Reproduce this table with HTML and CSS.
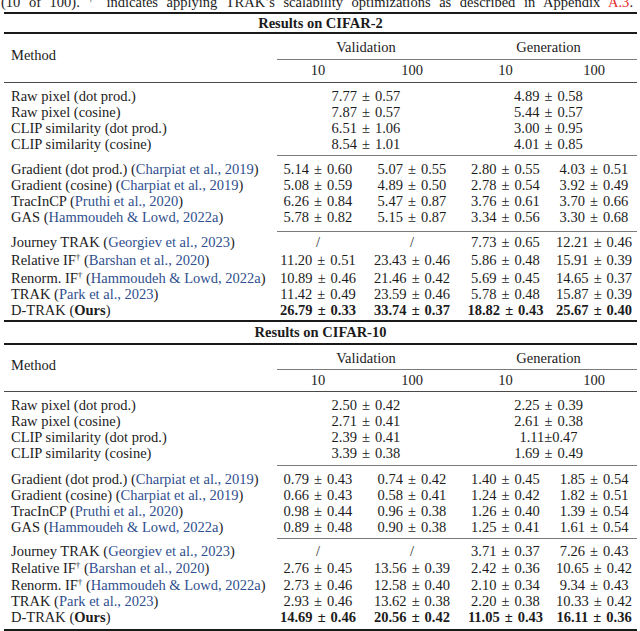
FILE: index.html
```html
<!DOCTYPE html>
<html lang="en">
<head>
<meta charset="utf-8">
<title>Results on CIFAR-2 and CIFAR-10</title>
<link rel="stylesheet" href="styles.css">
</head>
<body>
<p class="caption">(10 of 100). <sup class="dag">†</sup> indicates applying TRAK’s scalability optimizations as described in Appendix <a class="ref">A.3</a>.</p>

<table class="results results--c2">
  <colgroup><col class="c-method"><col class="c-v10"><col class="c-v100"><col class="c-g10"><col class="c-g100"></colgroup>
  <thead>
    <tr class="title"><th colspan="5">Results on CIFAR-2</th></tr>
    <tr class="head1"><th rowspan="2" class="method">Method</th><th colspan="2" class="cm-first">Validation</th><th colspan="2" class="cm">Generation</th></tr>
    <tr class="head2"><th>10</th><th>100</th><th>10</th><th>100</th></tr>
  </thead>
  <tbody class="grp grp-1">
    <tr><td>Raw pixel (dot prod.)</td><td colspan="2">7.77 ± 0.57</td><td colspan="2">4.89 ± 0.58</td></tr>
    <tr><td>Raw pixel (cosine)</td><td colspan="2">7.87 ± 0.57</td><td colspan="2">5.44 ± 0.57</td></tr>
    <tr><td>CLIP similarity (dot prod.)</td><td colspan="2">6.51 ± 1.06</td><td colspan="2">3.00 ± 0.95</td></tr>
    <tr><td>CLIP similarity (cosine)</td><td colspan="2">8.54 ± 1.01</td><td colspan="2">4.01 ± 0.85</td></tr>
  </tbody>
  <tbody class="grp grp-2">
    <tr><td>Gradient (dot prod.) (<span class="cite">Charpiat et al., 2019</span>)</td><td>5.14 ± 0.60</td><td>5.07 ± 0.55</td><td>2.80 ± 0.55</td><td>4.03 ± 0.51</td></tr>
    <tr><td>Gradient (cosine) (<span class="cite">Charpiat et al., 2019</span>)</td><td>5.08 ± 0.59</td><td>4.89 ± 0.50</td><td>2.78 ± 0.54</td><td>3.92 ± 0.49</td></tr>
    <tr><td>TracInCP (<span class="cite">Pruthi et al., 2020</span>)</td><td>6.26 ± 0.84</td><td>5.47 ± 0.87</td><td>3.76 ± 0.61</td><td>3.70 ± 0.66</td></tr>
    <tr><td>GAS (<span class="cite">Hammoudeh &amp; Lowd, 2022a</span>)</td><td>5.78 ± 0.82</td><td>5.15 ± 0.87</td><td>3.34 ± 0.56</td><td>3.30 ± 0.68</td></tr>
  </tbody>
  <tbody class="grp grp-3">
    <tr><td>Journey TRAK (<span class="cite">Georgiev et al., 2023</span>)</td><td>/</td><td>/</td><td>7.73 ± 0.65</td><td>12.21 ± 0.46</td></tr>
    <tr class="has-dag"><td>Relative IF<sup class="dag">†</sup> (<span class="cite">Barshan et al., 2020</span>)</td><td>11.20 ± 0.51</td><td>23.43 ± 0.46</td><td>5.86 ± 0.48</td><td>15.91 ± 0.39</td></tr>
    <tr class="has-dag"><td>Renorm. IF<sup class="dag">†</sup> (<span class="cite">Hammoudeh &amp; Lowd, 2022a</span>)</td><td>10.89 ± 0.46</td><td>21.46 ± 0.42</td><td>5.69 ± 0.45</td><td>14.65 ± 0.37</td></tr>
    <tr><td>TRAK (<span class="cite">Park et al., 2023</span>)</td><td>11.42 ± 0.49</td><td>23.59 ± 0.46</td><td>5.78 ± 0.48</td><td>15.87 ± 0.39</td></tr>
    <tr class="best"><td>D-TRAK (<b>Ours</b>)</td><td>26.79 ± 0.33</td><td>33.74 ± 0.37</td><td>18.82 ± 0.43</td><td>25.67 ± 0.40</td></tr>
  </tbody>
</table>

<table class="results results--c10">
  <colgroup><col class="c-method"><col class="c-v10"><col class="c-v100"><col class="c-g10"><col class="c-g100"></colgroup>
  <thead>
    <tr class="title"><th colspan="5">Results on CIFAR-10</th></tr>
    <tr class="head1"><th rowspan="2" class="method">Method</th><th colspan="2" class="cm-first">Validation</th><th colspan="2" class="cm">Generation</th></tr>
    <tr class="head2"><th>10</th><th>100</th><th>10</th><th>100</th></tr>
  </thead>
  <tbody class="grp grp-1">
    <tr><td>Raw pixel (dot prod.)</td><td colspan="2">2.50 ± 0.42</td><td colspan="2">2.25 ± 0.39</td></tr>
    <tr><td>Raw pixel (cosine)</td><td colspan="2">2.71 ± 0.41</td><td colspan="2">2.61 ± 0.38</td></tr>
    <tr><td>CLIP similarity (dot prod.)</td><td colspan="2">2.39 ± 0.41</td><td colspan="2">1.11±0.47</td></tr>
    <tr><td>CLIP similarity (cosine)</td><td colspan="2">3.39 ± 0.38</td><td colspan="2">1.69 ± 0.49</td></tr>
  </tbody>
  <tbody class="grp grp-2">
    <tr><td>Gradient (dot prod.) (<span class="cite">Charpiat et al., 2019</span>)</td><td>0.79 ± 0.43</td><td>0.74 ± 0.42</td><td>1.40 ± 0.45</td><td>1.85 ± 0.54</td></tr>
    <tr><td>Gradient (cosine) (<span class="cite">Charpiat et al., 2019</span>)</td><td>0.66 ± 0.43</td><td>0.58 ± 0.41</td><td>1.24 ± 0.42</td><td>1.82 ± 0.51</td></tr>
    <tr><td>TracInCP (<span class="cite">Pruthi et al., 2020</span>)</td><td>0.98 ± 0.44</td><td>0.96 ± 0.38</td><td>1.26 ± 0.40</td><td>1.39 ± 0.54</td></tr>
    <tr><td>GAS (<span class="cite">Hammoudeh &amp; Lowd, 2022a</span>)</td><td>0.89 ± 0.48</td><td>0.90 ± 0.38</td><td>1.25 ± 0.41</td><td>1.61 ± 0.54</td></tr>
  </tbody>
  <tbody class="grp grp-3">
    <tr><td>Journey TRAK (<span class="cite">Georgiev et al., 2023</span>)</td><td>/</td><td>/</td><td>3.71 ± 0.37</td><td>7.26 ± 0.43</td></tr>
    <tr class="has-dag"><td>Relative IF<sup class="dag">†</sup> (<span class="cite">Barshan et al., 2020</span>)</td><td>2.76 ± 0.45</td><td>13.56 ± 0.39</td><td>2.42 ± 0.36</td><td>10.65 ± 0.42</td></tr>
    <tr class="has-dag"><td>Renorm. IF<sup class="dag">†</sup> (<span class="cite">Hammoudeh &amp; Lowd, 2022a</span>)</td><td>2.73 ± 0.46</td><td>12.58 ± 0.40</td><td>2.10 ± 0.34</td><td>9.34 ± 0.43</td></tr>
    <tr><td>TRAK (<span class="cite">Park et al., 2023</span>)</td><td>2.93 ± 0.46</td><td>13.62 ± 0.38</td><td>2.20 ± 0.38</td><td>10.33 ± 0.42</td></tr>
    <tr class="best"><td>D-TRAK (<b>Ours</b>)</td><td>14.69 ± 0.46</td><td>20.56 ± 0.42</td><td>11.05 ± 0.43</td><td>16.11 ± 0.36</td></tr>
  </tbody>
</table>
</body>
</html>
```

FILE: styles.css
```css
:root {
  --ink: #1c1c1c;
  --cite: #2f4f8e;
  --ref: #e52b2b;
  --thick: #1a1a1a;
  --mid: #4a4a4a;
  --cmid: #7a7a7a;
}

html, body {
  margin: 0;
  padding: 0;
  background: #fff;
}

body {
  font-family: "Liberation Serif", "Times New Roman", serif;
  font-size: 14.5px;
  line-height: 16px;
  color: var(--ink);
  overflow: hidden;
}

.caption {
  margin: -6px 0 2px 1px;
  width: 632px;
  text-align: justify;
  text-align-last: justify;
  white-space: nowrap;
}

.ref {
  color: var(--ref);
  text-decoration: none;
}

.dag {
  font-size: 9px;
  line-height: 0;
  vertical-align: 5px;
}

.cite {
  color: var(--cite);
}

/* ---------- table ---------- */
.results {
  margin-left: 4px;
  width: 633px;
  table-layout: fixed;
  border-collapse: collapse;
  border-spacing: 0;
}

.c-method { width: 268px; }
.c-v10 { width: 92px; }
.c-v100 { width: 96px; }
.c-g10 { width: 91px; }
.c-g100 { width: 86px; }

.results th,
.results td {
  padding: 0;
  font-weight: normal;
  text-align: center;
  white-space: nowrap;
  vertical-align: top;
}

.results td + td {
  word-spacing: 1.4px;
}

.results td:first-child {
  text-align: left;
  padding-left: 7px;
}

/* title row */
.results .title th {
  font-weight: bold;
  padding: 1px 0;
  border-top: 2px solid var(--thick);
  border-bottom: 2px solid var(--thick);
}

.results--c10 .title th {
  border-top: 0;
  padding: 2px 0 3px;
}

/* header rows */
.results .head1 th {
  padding: 5px 0 5px;
}

.results .head1 th.method {
  text-align: left;
  padding: 13px 0 0 7px;
}

.results .head1 th.cm-first {
  background: linear-gradient(var(--cmid), var(--cmid)) right bottom / calc(100% - 5px) 1px no-repeat;
}

.results .head1 th.cm {
  background: linear-gradient(var(--cmid), var(--cmid)) right bottom / 100% 1px no-repeat;
}

.results .head2 th {
  padding: 2px 0 4px;
}

.results thead {
  border-bottom: 1px solid var(--mid);
}

.results--c10 .head1 th { padding-bottom: 4px; }
.results--c10 .head1 th.method { padding-top: 12px; }
.results--c10 .head2 th { padding-bottom: 3px; }

/* row groups */
.grp tr:first-child td { padding-top: 5px; }
.grp-1 tr:last-child td { padding-bottom: 4px; }
.grp-2 tr:last-child td { padding-bottom: 7px; }
.grp-3 tr:first-child td { padding-top: 2px; }
.grp-3 tr:last-child td { padding-bottom: 2px; }

.grp-1 tr:last-child td + td,
.grp-2 tr:last-child td + td {
  background: linear-gradient(var(--cmid), var(--cmid)) right bottom / 100% 1px no-repeat;
}

.grp-1 tr:last-child td:nth-child(2),
.grp-2 tr:last-child td:nth-child(2) {
  background-size: calc(100% - 5px) 1px;
}

.has-dag td { padding-top: 2px; }

.results tbody.grp-3 {
  border-bottom: 2px solid var(--thick);
}

.best td { font-weight: bold; }
.best td:first-child { font-weight: normal; }

.results--c10 .grp-1 tr:last-child td { padding-bottom: 5px; }
.results--c10 .grp-2 tr:last-child td { padding-bottom: 4px; }
.results--c10 .grp-3 tr:first-child td { padding-top: 4px; }
.results--c10 .has-dag td { padding-top: 1px; }
.results--c10 .grp-3 tr:last-child td { padding-bottom: 4px; }
```
